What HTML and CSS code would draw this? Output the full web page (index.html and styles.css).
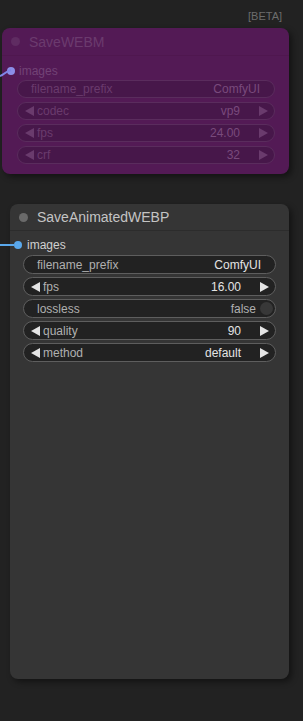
FILE: index.html
```html
<!DOCTYPE html>
<html lang="en">
<head>
  <meta charset="UTF-8" />
  <title>ComfyUI graph</title>
  <link rel="stylesheet" href="styles.css">
</head>
<body>
  <div class="canvas">
    <span class="beta">[BETA]</span>

    <div class="node muted" style="left:2px;top:28px;width:287px;height:146px;">
      <div class="title"><span class="dot"></span>SaveWEBM</div>
      <div class="body">
        <div class="slot"><span class="slot-dot"></span>images</div>
        <div class="widget text"><span class="label">filename_prefix</span><span class="value">ComfyUI</span></div>
        <div class="widget combo"><span class="arrow l"></span><span class="label">codec</span><span class="value">vp9</span><span class="arrow r"></span></div>
        <div class="widget combo"><span class="arrow l"></span><span class="label">fps</span><span class="value">24.00</span><span class="arrow r"></span></div>
        <div class="widget combo"><span class="arrow l"></span><span class="label">crf</span><span class="value">32</span><span class="arrow r"></span></div>
      </div>
      <svg class="link" width="14" height="12" viewBox="0 0 14 12"><path d="M0 10 C4 9 6 5 11 4" stroke="#7f86e8" stroke-width="2" fill="none"/></svg>
    </div>

    <div class="node" style="left:10px;top:204px;width:279px;height:475px;">
      <div class="title"><span class="dot"></span>SaveAnimatedWEBP</div>
      <div class="body">
        <div class="slot"><span class="slot-dot"></span>images</div>
        <div class="widget text"><span class="label">filename_prefix</span><span class="value">ComfyUI</span></div>
        <div class="widget combo"><span class="arrow l"></span><span class="label">fps</span><span class="value">16.00</span><span class="arrow r"></span></div>
        <div class="widget toggle"><span class="label">lossless</span><span class="value">false</span><span class="knob"></span></div>
        <div class="widget combo"><span class="arrow l"></span><span class="label">quality</span><span class="value">90</span><span class="arrow r"></span></div>
        <div class="widget combo"><span class="arrow l"></span><span class="label">method</span><span class="value">default</span><span class="arrow r"></span></div>
      </div>
      <span class="wire"></span>
    </div>
  </div>
</body>
</html>
```

FILE: styles.css
```css
body {
  margin: 0;
  background: #222;
  font-family: 'Liberation Sans', Arial, sans-serif;
}
.canvas {
  position: relative;
  width: 303px;
  height: 721px;
  overflow: hidden;
  background: #222;
}
.beta {
  position: absolute;
  left: 248px;
  top: 10px;
  font-size: 11px;
  color: #6c6c6c;
}
.node {
  position: absolute;
  box-sizing: border-box;
  background: #353535;
  border-radius: 8px;
  box-shadow: 3px 3px 6px rgba(0,0,0,0.45);
}
.title {
  display: flex;
  align-items: center;
  height: 26px;
  padding-left: 9px;
  font-size: 14px;
  color: #c4c4c4;
  border-bottom: 1px solid #2c2c2c;
}
.dot {
  width: 9px;
  height: 9px;
  border-radius: 50%;
  background: #6a6a6a;
  margin-right: 9px;
}
.body {
  padding: 7px 13px 0 13px;
}
.slot {
  display: flex;
  align-items: center;
  height: 14px;
  margin-left: -9px;
  margin-bottom: 3px;
  font-size: 12px;
  color: #d0d0d0;
}
.slot-dot {
  width: 8px;
  height: 8px;
  border-radius: 50%;
  background: #5aa8ec;
  margin-right: 5px;
}
.wire {
  position: absolute;
  left: -10px;
  top: 40px;
  width: 14px;
  height: 2px;
  background: #5aa8ec;
}
.widget {
  display: flex;
  align-items: center;
  box-sizing: border-box;
  height: 19px;
  margin-bottom: 3px;
  padding: 0 6px 0 7px;
  background: #222;
  border: 1px solid #5e5e5e;
  border-radius: 10px;
  font-size: 12px;
}
.label {
  flex: 1;
  color: #b0b0b0;
}
.value {
  color: #e4e4e4;
}
.text {
  padding: 0 14px 0 13px;
}
.combo .value {
  margin-right: 19px;
}
.combo .label {
  margin-left: 3px;
}
.arrow {
  width: 0;
  height: 0;
  border-top: 5px solid transparent;
  border-bottom: 5px solid transparent;
}
.arrow.l {
  border-right: 9px solid #e4e4e4;
}
.arrow.r {
  border-left: 9px solid #e4e4e4;
}
.toggle {
  padding: 0 2px 0 13px;
}
.toggle .value {
  color: #b0b0b0;
  margin-right: 4px;
}
.knob {
  width: 13px;
  height: 13px;
  border-radius: 50%;
  background: #383838;
}

/* muted purple node */
.muted {
  background: #531a55;
}
.muted .title {
  height: 27px;
  color: #6b3a6e;
  border-bottom: 1px solid #4f174f;
}
.muted .dot {
  background: #5f2c62;
}
.muted .body {
  padding: 8px 14px 0 15px;
}
.muted .slot {
  color: #724275;
  margin-left: -10px;
  margin-bottom: 2px;
}
.muted .slot-dot {
  background: #8b8ee8;
  margin-right: 4px;
}
.muted .widget {
  height: 18px;
  margin-bottom: 4px;
  background: #47174a;
  border-color: #5a2c5d;
}
.muted .label {
  color: #6a3b6d;
}
.muted .value {
  color: #794a7c;
}
.muted .arrow.l {
  border-right-color: #6a3b6d;
}
.muted .arrow.r {
  border-left-color: #6a3b6d;
}
.link {
  position: absolute;
  left: -2px;
  top: 38px;
}
```
